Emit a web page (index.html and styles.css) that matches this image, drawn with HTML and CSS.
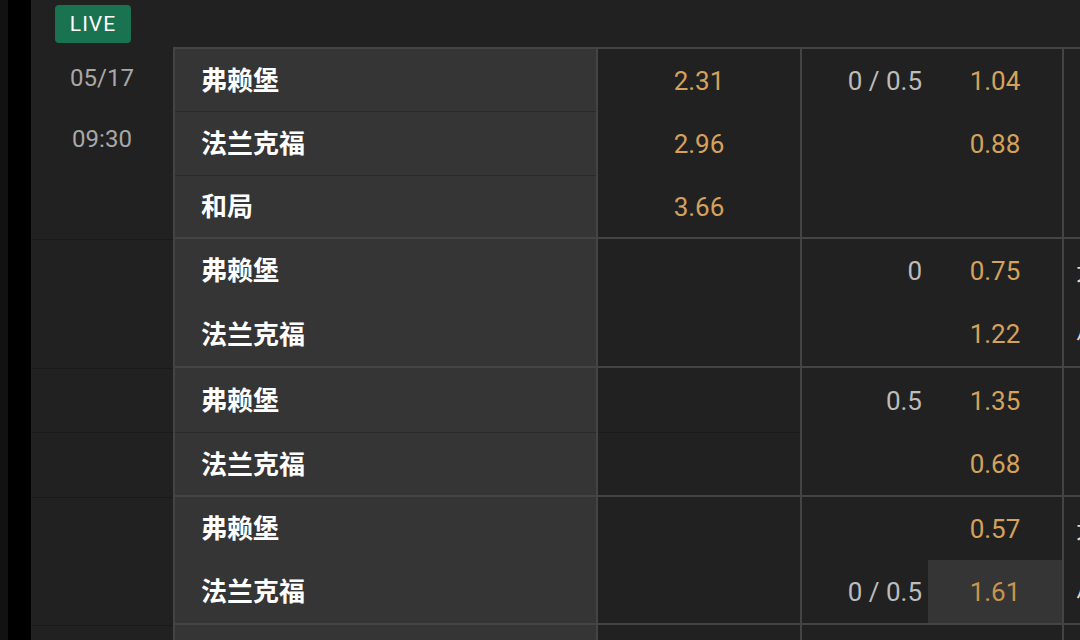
FILE: index.html
```html
<!DOCTYPE html>
<html lang="zh-CN">
<head>
<meta charset="utf-8">
<title>赛事赔率</title>
<link rel="stylesheet" href="styles.css">
</head>
<body>
<div class="edge"></div>
<div class="rail"></div>
<main class="board">
  <header class="top"><span class="live">LIVE</span></header>

  <section class="group g1">
    <div class="date first">
      <span>05/17</span>
      <span>09:30</span>
    </div>
    <div class="teams">
      <div class="cell sep">弗赖堡</div>
      <div class="cell sep">法兰克福</div>
      <div class="cell">和局</div>
    </div>
    <div class="odds">
      <div class="cell">2.31</div>
      <div class="cell">2.96</div>
      <div class="cell">3.66</div>
    </div>
    <div class="hcap">
      <div class="cell"><span class="line">0 / 0.5</span><span class="price">1.04</span></div>
      <div class="cell"><span class="line"></span><span class="price">0.88</span></div>
      <div class="cell"><span class="line"></span><span class="price"></span></div>
    </div>
    <div class="more">
      <div class="cell"></div>
      <div class="cell"></div>
      <div class="cell"></div>
    </div>
  </section>

  <section class="group g2">
    <div class="date"></div>
    <div class="teams">
      <div class="cell">弗赖堡</div>
      <div class="cell">法兰克福</div>
    </div>
    <div class="odds">
      <div class="cell"></div>
      <div class="cell"></div>
    </div>
    <div class="hcap">
      <div class="cell"><span class="line">0</span><span class="price">0.75</span></div>
      <div class="cell"><span class="line"></span><span class="price">1.22</span></div>
    </div>
    <div class="more">
      <div class="cell">大 2.5</div>
      <div class="cell">小 2.5</div>
    </div>
  </section>

  <section class="group g3">
    <div class="date">
      <div class="cell sep"></div>
      <div class="cell"></div>
    </div>
    <div class="teams">
      <div class="cell sep">弗赖堡</div>
      <div class="cell">法兰克福</div>
    </div>
    <div class="odds">
      <div class="cell sep"></div>
      <div class="cell"></div>
    </div>
    <div class="hcap">
      <div class="cell"><span class="line">0.5</span><span class="price">1.35</span></div>
      <div class="cell"><span class="line"></span><span class="price">0.68</span></div>
    </div>
    <div class="more">
      <div class="cell"></div>
      <div class="cell"></div>
    </div>
  </section>

  <section class="group g4">
    <div class="date"></div>
    <div class="teams">
      <div class="cell">弗赖堡</div>
      <div class="cell">法兰克福</div>
    </div>
    <div class="odds">
      <div class="cell"></div>
      <div class="cell"></div>
    </div>
    <div class="hcap">
      <div class="cell"><span class="line"></span><span class="price">0.57</span></div>
      <div class="cell"><span class="line">0 / 0.5</span><span class="price active">1.61</span></div>
    </div>
    <div class="more">
      <div class="cell">大 2.5</div>
      <div class="cell">小 2.5</div>
    </div>
  </section>

  <section class="group g5">
    <div class="date"></div>
    <div class="teams">
      <div class="cell">弗赖堡</div>
    </div>
    <div class="odds">
      <div class="cell"></div>
    </div>
    <div class="hcap">
      <div class="cell"><span class="line"></span><span class="price"></span></div>
    </div>
    <div class="more">
      <div class="cell"></div>
    </div>
  </section>
</main>
</body>
</html>
```

FILE: styles.css
```css
* {
  box-sizing: border-box;
  margin: 0;
  padding: 0;
}

html,
body {
  height: 100%;
  overflow: hidden;
  background: #212121;
}

body {
  display: flex;
  font-family: Roboto, "Noto Sans CJK SC", sans-serif;
  color: #fff;
}

.edge {
  width: 8px;
  flex: none;
  background: #121212;
}

.rail {
  width: 23px;
  flex: none;
  background: #000;
}

.board {
  flex: 1;
  min-width: 0;
  display: flex;
  flex-direction: column;
  background: #212121;
}

.top {
  height: 47px;
  flex: none;
  padding: 5px 0 0 24px;
}

.live {
  display: inline-flex;
  align-items: center;
  justify-content: center;
  width: 76px;
  height: 38px;
  border-radius: 4px;
  background: #1a7350;
  color: #fff;
  font-size: 21px;
  letter-spacing: 1px;
}

.group {
  display: flex;
  flex: none;
}

/* date column */
.date {
  width: 142px;
  flex: none;
  display: flex;
  flex-direction: column;
  margin-top: 2px;
  border-top: 1px solid #1a1a1a;
  color: #a8a8a8;
  font-size: 24px;
}

.date.first {
  margin-top: 0;
  border-top: 0;
  align-items: center;
  gap: 33px;
  padding-top: 17px;
  line-height: 28px;
}

.date .cell.sep {
  border-bottom: 1px solid #1a1a1a;
}

/* team column */
.teams {
  width: 425px;
  flex: none;
  background: #353535;
  border: 2px solid #444;
  border-bottom: 0;
}

.teams .cell {
  padding-left: 26px;
  padding-bottom: 4px;
  font-family: "Noto Sans CJK SC", sans-serif;
  font-weight: 700;
  font-size: 26px;
  color: #fff;
}

.teams .cell.sep {
  border-bottom: 1px solid #2a2a2a;
}

/* 1x2 column */
.odds {
  width: 204px;
  flex: none;
  border-top: 2px solid #444;
  border-right: 2px solid #444;
}

.odds .cell {
  justify-content: center;
  font-size: 26px;
  color: #d5a25c;
}

.odds .cell.sep {
  border-bottom: 1px solid #1a1a1a;
}

/* handicap column */
.hcap {
  width: 262px;
  flex: none;
  border-top: 2px solid #444;
  border-right: 2px solid #444;
}

.hcap .cell {
  align-items: stretch;
  font-size: 26px;
}

.line {
  width: 126px;
  display: flex;
  align-items: center;
  justify-content: flex-end;
  padding-right: 6px;
  color: #bcbcbc;
}

.price {
  flex: 1;
  display: flex;
  align-items: center;
  justify-content: center;
  color: #d5a25c;
}

.price.active {
  background: #353535;
  color: #c9944e;
}

/* over / under column */
.more {
  flex: 1;
  min-width: 0;
  border-top: 2px solid #444;
  overflow: hidden;
}

.more .cell {
  padding-left: 12px;
  padding-bottom: 3px;
  white-space: nowrap;
  font-family: "Noto Sans CJK SC", sans-serif;
  font-size: 24px;
  color: #d8d8d8;
}

/* rows */
.cell {
  display: flex;
  align-items: center;
}

.g1 .cell:nth-child(1) { height: 63px; }
.g1 .cell:nth-child(2) { height: 64px; }
.g1 .cell:nth-child(3) { height: 61px; }

.g2 .cell:nth-child(1) { height: 63px; }
.g2 .cell:nth-child(2) { height: 64px; }

.g3 .cell:nth-child(1) { height: 65px; }
.g3 .cell:nth-child(2) { height: 62px; }
.g3 .date .cell:nth-child(1) { height: 64px; }

.g4 .cell { height: 63px; }
.g5 .cell { height: 63px; }
```
